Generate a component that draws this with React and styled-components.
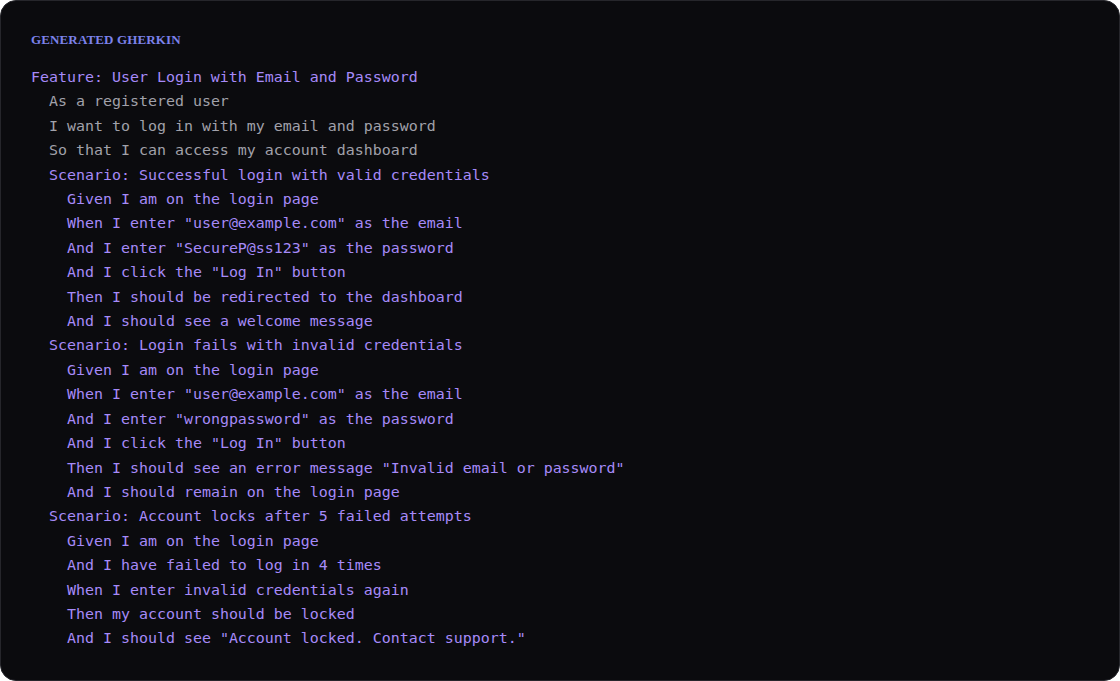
import React from "react";
import styled, { createGlobalStyle } from "styled-components";

const Global = createGlobalStyle`
  html, body { margin: 0; padding: 0; background: #ffffff; }
  #root { width: 1120px; height: 681px; }
`;

const Card = styled.section`
  box-sizing: border-box;
  width: 1120px;
  height: 681px;
  background: #0b0b0e;
  border: 1px solid #26262b;
  border-radius: 16px;
  padding: 31px 30px;
  display: flex;
  flex-direction: column;
  gap: 17px;
`;

const Label = styled.h2`
  margin: 0;
  font-family: "Liberation Serif", "Times New Roman", serif;
  font-weight: 700;
  font-size: 13px;
  line-height: 16px;
  letter-spacing: 0.01em;
  text-transform: uppercase;
  color: #7c82ea;
`;

const Code = styled.div`
  display: flex;
  flex-direction: column;
  font-family: "DejaVu Sans Mono", "Liberation Mono", monospace;
  font-size: 14.95px;
  line-height: 24.4px;
`;

const colors = {
  keyword: "#a68af8",
  text: "#a1a1aa",
  step: "#a68af8",
};

const Line = styled.div`
  white-space: pre;
  padding-left: ${(p) => p.$indent * 18}px;
  color: ${(p) => colors[p.$kind]};
`;

const lines = [
  [0, "keyword", "Feature: User Login with Email and Password"],
  [1, "text", "As a registered user"],
  [1, "text", "I want to log in with my email and password"],
  [1, "text", "So that I can access my account dashboard"],
  [1, "keyword", "Scenario: Successful login with valid credentials"],
  [2, "step", "Given I am on the login page"],
  [2, "step", 'When I enter "user@example.com" as the email'],
  [2, "step", 'And I enter "SecureP@ss123" as the password'],
  [2, "step", 'And I click the "Log In" button'],
  [2, "step", "Then I should be redirected to the dashboard"],
  [2, "step", "And I should see a welcome message"],
  [1, "keyword", "Scenario: Login fails with invalid credentials"],
  [2, "step", "Given I am on the login page"],
  [2, "step", 'When I enter "user@example.com" as the email'],
  [2, "step", 'And I enter "wrongpassword" as the password'],
  [2, "step", 'And I click the "Log In" button'],
  [2, "step", 'Then I should see an error message "Invalid email or password"'],
  [2, "step", "And I should remain on the login page"],
  [1, "keyword", "Scenario: Account locks after 5 failed attempts"],
  [2, "step", "Given I am on the login page"],
  [2, "step", "And I have failed to log in 4 times"],
  [2, "step", "When I enter invalid credentials again"],
  [2, "step", "Then my account should be locked"],
  [2, "step", 'And I should see "Account locked. Contact support."'],
];

export default function App() {
  return (
    <>
      <Global />
      <Card>
        <Label>Generated Gherkin</Label>
        <Code>
          {lines.map(([indent, kind, text], i) => (
            <Line key={i} $indent={indent} $kind={kind}>
              {text}
            </Line>
          ))}
        </Code>
      </Card>
    </>
  );
}
